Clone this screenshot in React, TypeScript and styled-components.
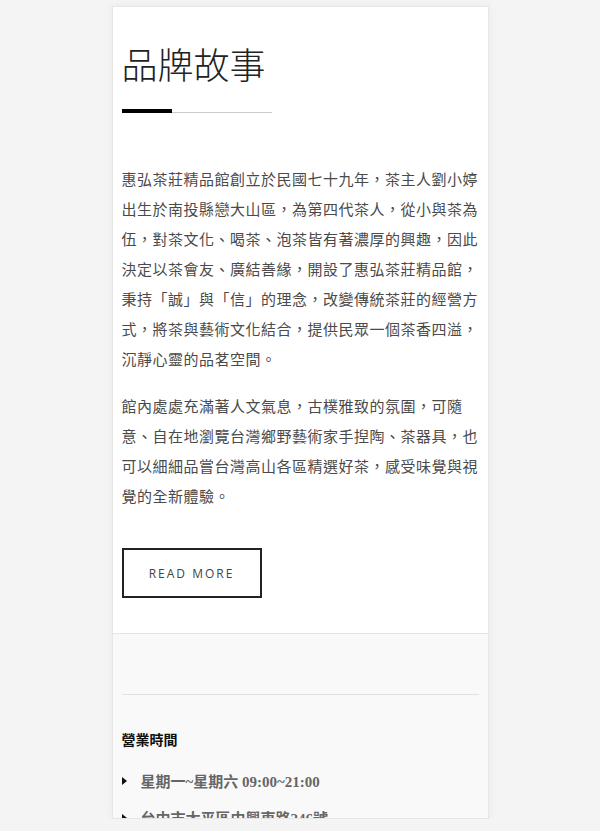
import * as React from "react";
import styled, { createGlobalStyle } from "styled-components";

const GlobalStyle = createGlobalStyle`
    html, body {
        margin: 0;
        padding: 0;
        background: #f4f4f4;
    }
`;

const Card = styled.div`
    box-sizing: border-box;
    width: 377px;
    height: 813px;
    margin: 6px auto 0;
    background: #ffffff;
    border: 1px solid #e6e6e6;
    box-shadow: 0 0 8px rgba(0, 0, 0, 0.05);
    overflow: hidden;
`;

const Story = styled.section`
    padding: 32px 9px 35px;
    border-bottom: 1px solid #e4e4e4;
`;

const Title = styled.h2`
    margin: 0;
    font-family: "Noto Sans CJK TC", serif;
    font-size: 36px;
    font-weight: 300;
    line-height: 48px;
    color: #222;
`;

const TitleRule = styled.div`
    position: relative;
    width: 150px;
    height: 4px;
    margin: 22px 0 51px;
    border-bottom: 1px solid #cccccc;
    box-sizing: border-box;
    &::before {
        content: "";
        position: absolute;
        left: 0;
        top: 0;
        width: 50px;
        height: 4px;
        background: #000;
    }
`;

const Paragraph = styled.p`
    margin: 0 0 17px;
    font-family: "Noto Sans CJK TC", serif;
    font-size: 15px;
    line-height: 30px;
    letter-spacing: 0.5px;
    color: #4a4a4a;
`;

const ReadMore = styled.button`
    margin-top: 20px;
    width: 140px;
    height: 50px;
    background: transparent;
    border: 2px solid #222;
    font-family: "Open Sans", sans-serif;
    font-size: 12px;
    letter-spacing: 2px;
    color: #444;
    cursor: pointer;
`;

const Info = styled.section`
    background: #f9f9f9;
    padding: 60px 9px 0;
    min-height: 300px;
`;

const InfoRule = styled.hr`
    margin: 0;
    border: 0;
    border-top: 1px solid #e2e2e2;
`;

const InfoTitle = styled.h4`
    margin: 34px 0 0;
    font-family: "Noto Sans CJK TC", serif;
    font-size: 14px;
    font-weight: 700;
    line-height: 20px;
    color: #111;
`;

const InfoList = styled.ul`
    list-style: none;
    margin: 15px 0 0;
    padding: 0;
`;

const InfoItem = styled.li`
    display: flex;
    align-items: center;
    gap: 14px;
    height: 33px;
    margin-bottom: 4px;
    font-family: "Liberation Serif", "Noto Sans CJK TC", serif;
    font-size: 15px;
    font-weight: 700;
    color: #666;
    &::before {
        content: "";
        width: 0;
        height: 0;
        border-top: 4px solid transparent;
        border-bottom: 4px solid transparent;
        border-left: 5px solid #111;
    }
`;

const paragraphs = [
    "惠弘茶莊精品館創立於民國七十九年，茶主人劉小婷出生於南投縣戀大山區，為第四代茶人，從小與茶為伍，對茶文化、喝茶、泡茶皆有著濃厚的興趣，因此決定以茶會友、廣結善緣，開設了惠弘茶莊精品館，秉持「誠」與「信」的理念，改變傳統茶莊的經營方式，將茶與藝術文化結合，提供民眾一個茶香四溢，沉靜心靈的品茗空間。",
    "館內處處充滿著人文氣息，古樸雅致的氛圍，可隨意、自在地瀏覽台灣鄉野藝術家手揑陶、茶器具，也可以細細品嘗台灣高山各區精選好茶，感受味覺與視覺的全新體驗。",
];

const info = ["星期一~星期六 09:00~21:00", "台中市太平區中興東路246號"];

export default function App() {
    return <>
        <GlobalStyle />
        <Card>
            <Story>
                <Title>品牌故事</Title>
                <TitleRule />
                {paragraphs.map((text, i) => <Paragraph key={i}>{text}</Paragraph>)}
                <ReadMore>READ MORE</ReadMore>
            </Story>
            <Info>
                <InfoRule />
                <InfoTitle>營業時間</InfoTitle>
                <InfoList>
                    {info.map((text, i) => <InfoItem key={i}>{text}</InfoItem>)}
                </InfoList>
            </Info>
        </Card>
    </>;
}
